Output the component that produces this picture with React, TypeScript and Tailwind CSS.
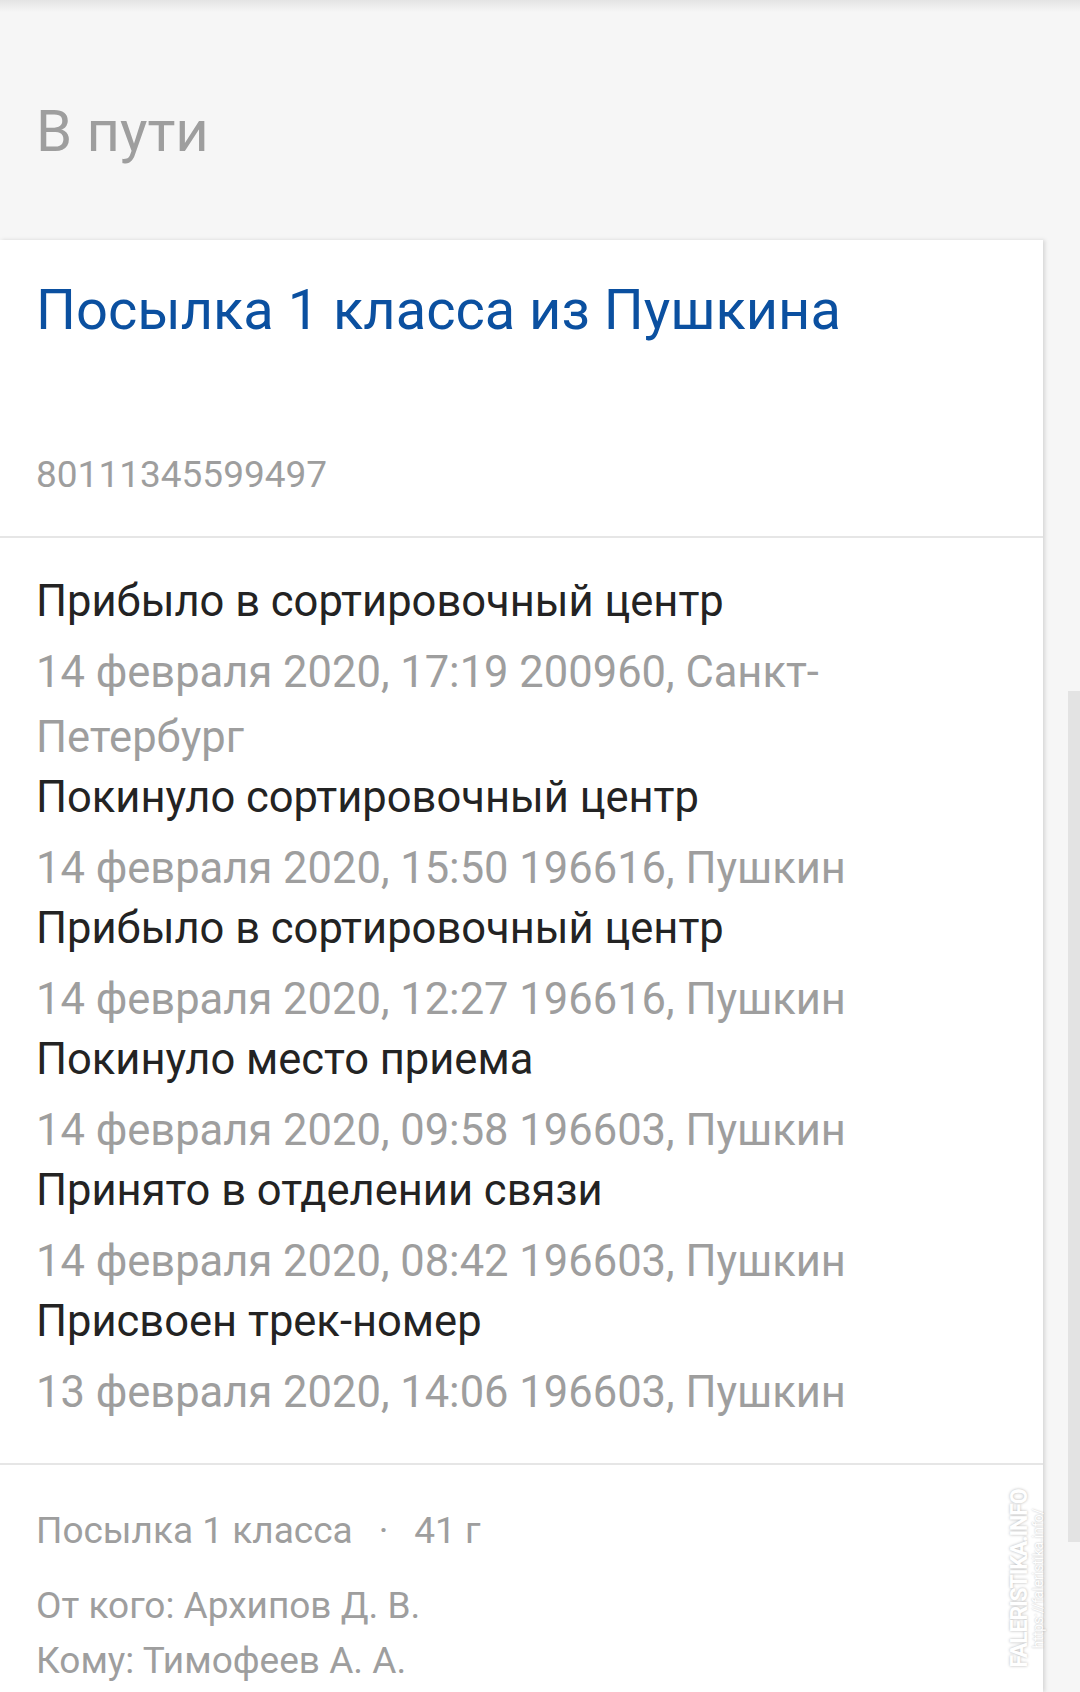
import React from 'react';

const events = [
  {
    title: 'Прибыло в сортировочный центр',
    date: '14 февраля 2020, 17:19 200960, Санкт-Петербург',
  },
  {
    title: 'Покинуло сортировочный центр',
    date: '14 февраля 2020, 15:50 196616, Пушкин',
  },
  {
    title: 'Прибыло в сортировочный центр',
    date: '14 февраля 2020, 12:27 196616, Пушкин',
  },
  {
    title: 'Покинуло место приема',
    date: '14 февраля 2020, 09:58 196603, Пушкин',
  },
  {
    title: 'Принято в отделении связи',
    date: '14 февраля 2020, 08:42 196603, Пушкин',
  },
  {
    title: 'Присвоен трек-номер',
    date: '13 февраля 2020, 14:06 196603, Пушкин',
  },
];

export default function App() {
  return (
    <div className="relative min-h-[1692px] w-[1080px] overflow-hidden bg-[#f6f6f6] font-['Roboto','Noto_Sans',sans-serif]">
      {/* app bar shadow */}
      <div className="h-[12px] bg-gradient-to-b from-[#e4e4e4] to-[#f6f6f6]" />

      <header className="pl-[36px] pt-[90px] pb-[80px]">
        <h1 className="text-[58px] leading-[58px] text-[#9e9e9e]">В пути</h1>
      </header>

      <main className="min-h-[1452px] w-[1043px] bg-white shadow-[2px_0_4px_rgba(0,0,0,0.13)]">
        <section className="px-[36px] pt-[38px] pb-[39px]">
          <h2 className="text-[56px] leading-[64px] text-[#0b50a0]">
            Посылка 1 класса из Пушкина
          </h2>
          <p className="mt-[111px] text-[37px] leading-[44px] text-[#9e9e9e]">
            80111345599497
          </p>
        </section>

        <div className="h-[2px] bg-[#e6e6e6]" />

        <ul className="flex flex-col pl-[36px] pr-[56px] pt-[36px] pb-[38px]">
          {events.map(({ title, date }, i) => (
            <li key={i}>
              <p className="text-[43.5px] leading-[56px] text-[#232323]">{title}</p>
              <p className="mt-[10px] text-[43.5px] leading-[65px] text-[#9e9e9e]">{date}</p>
            </li>
          ))}
        </ul>

        <div className="h-[2px] bg-[#e6e6e6]" />

        <footer className="px-[36px] pt-[44px] text-[37px] text-[#9e9e9e]">
          <p className="leading-[44px]">
            Посылка 1 класса
            <span className="mx-[26px]">·</span>
            41 г
          </p>
          <div className="mt-[25px] leading-[55px]">
            <p>От кого: Архипов Д. В.</p>
            <p>Кому: Тимофеев А. А.</p>
          </div>
        </footer>
      </main>

      {/* scrollbar */}
      <div className="absolute right-0 top-[691px] h-[851px] w-[12px] bg-[#e3e3e3]" />

      {/* watermark */}
      <div className="absolute left-[998px] top-[1490px] flex h-[176px] w-[58px] items-center justify-center">
        <div className="flex -rotate-90 flex-col items-center whitespace-nowrap leading-none">
          <span className="text-[23px] font-bold tracking-tighter text-white [text-shadow:0_0_3px_rgba(0,0,0,0.3)]">
            FALERISTIKA.INFO
          </span>
          <span className="text-[14px] text-white [text-shadow:0_0_2px_rgba(0,0,0,0.3)]">
            https://faleristika.info/
          </span>
        </div>
      </div>
    </div>
  );
}
